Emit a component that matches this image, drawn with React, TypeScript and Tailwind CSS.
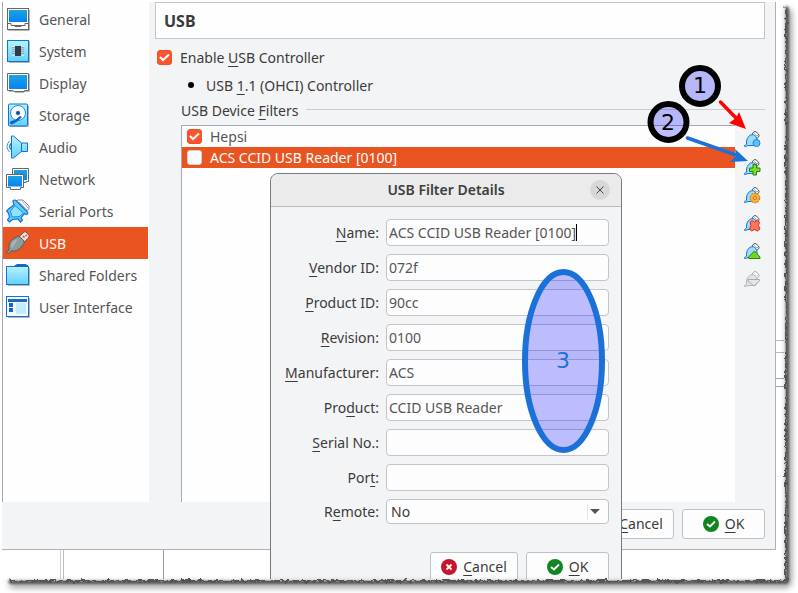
import type { ReactNode } from "react";

const FONT = "font-['Noto_Sans','Open_Sans',sans-serif]";

/* A label with its keyboard mnemonic: the letter after "&" is underlined. */
function Mnemonic({ text }: { text: string }) {
  const at = text.indexOf("&");
  if (at < 0) return <>{text}</>;
  return (
    <>
      {text.slice(0, at)}
      <span className="underline decoration-1 underline-offset-3">{text[at + 1]}</span>
      {text.slice(at + 2)}
    </>
  );
}

function Glyph({ children }: { children: ReactNode }) {
  return (
    <svg viewBox="0 0 24 24" className="size-6 shrink-0" aria-hidden="true">
      <defs>
        <linearGradient id="screen" x1="0" y1="0" x2="0" y2="1">
          <stop offset="0" stopColor="#1ba4de" />
          <stop offset="1" stopColor="#0583f5" />
        </linearGradient>
        <linearGradient id="pale" x1="0" y1="0" x2="0" y2="1">
          <stop offset="0" stopColor="#b5f3ff" />
          <stop offset="1" stopColor="#63d1fd" />
        </linearGradient>
      </defs>
      {children}
    </svg>
  );
}

const sidebarIcons: Record<string, ReactNode> = {
  General: (
    <Glyph>
      <path d="M2.500 23.500H23.500V3" stroke="#b5b5b5" fill="none" />
      <rect x="1.500" y="1.500" width="21" height="21" fill="#fff" stroke="#666" />
      <rect x="3" y="3" width="18" height="12" fill="url(#screen)" />
      <path d="M2 16.500H5V18.500H19V16.500H22M9 18.500V19.500H15V18.500" fill="none" stroke="#666" />
    </Glyph>
  ),
  System: (
    <Glyph>
      <path d="M3 23.500H23.500V2" stroke="#b5b5b5" fill="none" />
      <rect x="1.500" y="1.500" width="21" height="21" fill="url(#pale)" stroke="#1470d2" />
      <path d="M6 8H18M6 10H18M6 12H18M6 14H18M6 16H18" stroke="#fff" />
      <path d="M6 8.800H18M6 10.800H18M6 12.800H18M6 14.800H18" stroke="#567" strokeWidth=".7" />
      <rect x="9" y="7" width="6" height="10" fill="#303a48" />
    </Glyph>
  ),
  Display: (
    <Glyph>
      <path d="M3 20.500H9V21.500H18V20.500H23.500V3" stroke="#b5b5b5" fill="none" />
      <path d="M1.500 2.500H22.500V19.500H18.500V20.500H8.500L6.500 19.500H1.500Z" fill="#fff" stroke="#666" />
      <rect x="3" y="4" width="18" height="14" fill="url(#screen)" />
    </Glyph>
  ),
  Storage: (
    <Glyph>
      <path d="M4 23.500H22.500V3" stroke="#b5b5b5" fill="none" />
      <rect x="2.500" y="1" width="19" height="22" rx="1" fill="url(#pale)" stroke="#1470d2" />
      <circle cx="12" cy="10" r="7.500" fill="#fff" stroke="#1c8eda" />
      <circle cx="12" cy="10" r="3" fill="#d4efff" />
      <circle cx="12" cy="10" r="2" fill="#1248a8" />
      <path d="M5 18L9 17L14 13L16 14L12 18L7 21Q3.500 22 4 19Z" fill="#1262cc" />
    </Glyph>
  ),
  Audio: (
    <Glyph>
      <path d="M3.500 6Q-1.500 11.500 3.500 17" fill="none" stroke="#3c8fe0" />
      <path d="M5 8.500Q2.500 11.500 5 14.500" fill="none" stroke="#1470d2" strokeWidth="1.300" />
      <path d="M5.500 1H7.500L15.500 8H21.500V16.500H15.500L7.500 23H5.500Z" fill="url(#pale)" stroke="#1470d2" />
      <path d="M15.500 8V16.500" stroke="#1470d2" />
    </Glyph>
  ),
  Network: (
    <Glyph>
      <path d="M6.500 1.500H22.500V14.500H20V15.500H9V14.500H6.500Z" fill="#fff" stroke="#666" />
      <rect x="8" y="3" width="13" height="10" fill="url(#screen)" />
      <path d="M.500 7.500H17.500V20.500H14.500V22.500H4.500V20.500H.500Z" fill="#fff" stroke="#666" />
      <rect x="2" y="9" width="14" height="10.500" fill="url(#screen)" />
    </Glyph>
  ),
  "Serial Ports": (
    <Glyph>
      <path d="M9 3L12 1H17L23 7V10L19 13" fill="#fff" stroke="#888" />
      <path d="M13 3L21 11M16 2L22 9" stroke="#aaa" />
      <path d="M7 2Q8.500 0 10.500 2L21.500 13Q22.500 15 20.500 15.500L18.500 14.500L15 19L16.500 21L14.500 23L12 20L6.500 20.500L3.500 23L1.500 21L3.500 18L2.500 14L.500 12L2.500 10L8 6Z" fill="#5ccdfd" stroke="#1470d2" strokeWidth="1.200" />
      <path d="M9 6.500L17.500 14L13.500 17.500L6 18L4.500 12Z" fill="#8de2ff" stroke="#268ce0" />
    </Glyph>
  ),
  USB: (
    <Glyph>
      <path d="M13 6L18 1Q19 .500 20 1L23 4.500Q23.500 6 22.500 7L17 12Z" fill="#f8ded6" stroke="#75554e" />
      <path d="M17 5L18.500 6.500M19.500 4L20.500 5" stroke="#c64f35" strokeWidth="1.500" />
      <path d="M3 19Q2 11 7 8L12 5Q14 5 18 10Q19 12 16 15Q12 21 5 20L2 23L.500 21.500Z" fill="#8c9c9f" stroke="#59595b" />
      <path d="M5 17Q5 11 9 9L12 8L7 16Z" fill="#a9b5b6" />
    </Glyph>
  ),
  "Shared Folders": (
    <Glyph>
      <path d="M2 22.500H23.500V5" stroke="#b5b5b5" fill="none" />
      <path d="M8 3L11 1H20L22 3V5H8Z" fill="#1768c6" />
      <rect x=".500" y="3.500" width="22" height="18" fill="url(#pale)" stroke="#1470d2" />
      <path d="M9 3H22" stroke="#1768c6" strokeWidth="2" />
    </Glyph>
  ),
  "User Interface": (
    <Glyph>
      <path d="M2 22.500H23.500V3" stroke="#b5b5b5" fill="none" />
      <rect x=".500" y="1.500" width="22" height="20" fill="#f1fbff" stroke="#1470d2" />
      <rect x="2" y="4" width="19" height="3" fill="#1c68c2" />
      <path d="M3 8H7V12H3ZM3 13H7V17H3Z" fill="#1364cc" />
      <rect x="10" y="8" width="10" height="11" fill="#c2edff" />
    </Glyph>
  ),
};

function FilterIcon({ disabled, children }: { disabled?: boolean; children?: ReactNode }) {
  return (
    <svg viewBox="0 0 17 17" className="size-[17px]" aria-hidden="true">
      <path d="M8 3L10 .800Q11 .300 12 .800L14.500 3Q15.500 4.500 14.500 6L12 8Z" fill="#fff" stroke={disabled ? "#aaa" : "#555"} />
      <path d="M10.500 2.500L11.500 3.500M12.500 4L13.500 5" stroke={disabled ? "#bbb" : "#555"} />
      <path
        d="M2.500 13Q2 6.500 6.500 4Q9.500 2.500 12 5.500Q13.500 8 13 12L11.500 14.500H4L1.500 15.500H.500V14.500Z"
        fill={disabled ? "#e4e4e4" : "#9bdcfb"}
        stroke={disabled ? "#b5b5b5" : "#1b78c8"}
      />
      {children}
    </svg>
  );
}

const tools: { name: string; disabled?: boolean; badge: ReactNode }[] = [
  { name: "Add empty filter", badge: <circle cx="12.500" cy="12" r="3.500" fill="#5cc0ff" stroke="#2385d8" /> },
  {
    name: "Add filter from device",
    badge: <path d="M9 5.500H12.500V9H16V12.500H12.500V16H9V12.500H5.500V9H9Z" fill="#7bdd22" stroke="#268316" />,
  },
  {
    name: "Edit filter",
    badge: (
      <>
        <circle cx="11" cy="11" r="4.800" fill="#ffad35" stroke="#c56b0a" strokeDasharray="2 1" />
        <circle cx="11" cy="11" r="1.500" fill="#fff0c8" stroke="#c56b0a" />
      </>
    ),
  },
  {
    name: "Remove filter",
    badge: (
      <path
        d="M6 7L8 5.500L10.500 7L13 5.500L15.500 7L14.500 10.500L16 14L13.500 16L10.500 14.500L7.500 16L5.500 14L7 10.500Z"
        fill="#ff745c"
        stroke="#d23620"
      />
    ),
  },
  { name: "Move filter up", badge: <path d="M4.500 15.500V14L10.500 8L16 14V15.500Z" fill="#74d71c" stroke="#278619" /> },
  {
    name: "Move filter down",
    disabled: true,
    badge: <path d="M4 8.500H15.500V10L10 15L4 10Z" fill="#e6e6e6" stroke="#aaa" />,
  },
];

function Check({ id, checked }: { id: string; checked?: boolean }) {
  return (
    <span className="grid size-4 shrink-0 place-items-center">
      <input
        id={id}
        type="checkbox"
        defaultChecked={checked}
        className="peer col-start-1 row-start-1 size-[15px] appearance-none rounded-[3px] border border-[#d5d0ce] bg-[#fafafa] checked:border-[#f4511e] checked:bg-[#fb5430]"
      />
      <svg viewBox="0 0 15 15" className="pointer-events-none col-start-1 row-start-1 hidden size-[15px] peer-checked:block">
        <path d="M3 7L6 10L12 4.500" fill="none" stroke="#fff" strokeWidth="2" />
      </svg>
    </span>
  );
}

function DialogButton({ kind, className }: { kind: "ok" | "cancel"; className: string }) {
  const ok = kind === "ok";
  return (
    <button
      type="button"
      className={`flex h-[30px] items-center justify-center gap-1.5 rounded-[3px] border border-[#bdc2c9] bg-[#fdfdfd] text-[#3b3b3b] ${className}`}
    >
      <svg viewBox="0 0 16 16" className="size-4 shrink-0" aria-hidden="true">
        <circle cx="8" cy="8" r="8" fill={ok ? "#118522" : "#c7162b"} />
        <path
          d={ok ? "M4 8L7 10.500L12 5.500" : "M5.500 5.500L10.500 10.500M10.500 5.500L5.500 10.500"}
          fill="none"
          stroke="#fff"
          strokeWidth="1.800"
        />
      </svg>
      <span>
        <Mnemonic text={ok ? "&OK" : "&Cancel"} />
      </span>
    </button>
  );
}

const fields = [
  { id: "name", label: "&Name:", value: "ACS CCID USB Reader [0100]", caret: true },
  { id: "vendor", label: "&Vendor ID:", value: "072f" },
  { id: "product-id", label: "&Product ID:", value: "90cc" },
  { id: "revision", label: "&Revision:", value: "0100" },
  { id: "manufacturer", label: "&Manufacturer:", value: "ACS" },
  { id: "product", label: "Pro&duct:", value: "CCID USB Reader" },
  { id: "serial", label: "&Serial No.:", value: "" },
  { id: "port", label: "Por&t:", value: "" },
];

function FilterDialog() {
  return (
    <section
      role="dialog"
      aria-labelledby="dialog-title"
      className="absolute top-[173px] left-[270px] w-[352px] rounded-t-lg border border-[#77797c] bg-[#f3f4f6]"
    >
      <header className="grid h-[33px] grid-cols-[1fr_auto_1fr] items-center rounded-t-lg border-b border-[#b9b9b9] bg-[#ebebeb] px-[11px]">
        <h2 id="dialog-title" className="col-start-2 font-semibold text-[#3d3d3d]">
          USB Filter Details
        </h2>
        <button type="button" aria-label="Close" className="grid size-5 place-items-center justify-self-end rounded-full bg-[#d8d8d8]">
          <svg viewBox="0 0 8 8" className="size-2">
            <path d="M.500 .500L7.500 7.500M7.500 .500L.500 7.500" stroke="#444" />
          </svg>
        </button>
      </header>
      <form className="px-3 pt-3">
        <div className="grid grid-cols-[96px_1fr] items-center gap-x-[7px] gap-y-2">
          {fields.map((f) => (
            <div key={f.id} className="contents">
              <label htmlFor={f.id} className="text-right whitespace-nowrap text-[#3b3b3b]">
                <Mnemonic text={f.label} />
              </label>
              <div className="flex h-[27px] items-center rounded-[4px] border border-[#c3c4cc] bg-[#fdfdfd] px-0.5">
                <input
                  id={f.id}
                  defaultValue={f.value}
                  className={`bg-transparent text-[#555] outline-none ${f.caret ? "[field-sizing:content]" : "w-full"}`}
                />
                {f.caret && <span className="h-[17px] w-px bg-black" />}
              </div>
            </div>
          ))}
          <label htmlFor="remote" className="text-right text-[#3b3b3b]">
            <Mnemonic text="R&emote:" />
          </label>
          <div className="grid h-[25px] items-center rounded-[4px] border border-[#bdc2c9] bg-[#fdfdfd]">
            <select
              id="remote"
              defaultValue="No"
              className="col-start-1 row-start-1 h-full appearance-none px-1 text-[#3b3b3b] outline-none"
            >
              <option>No</option>
              <option>Yes</option>
              <option>Any</option>
            </select>
            <span className="pointer-events-none col-start-1 row-start-1 mr-2 flex h-4 items-center justify-self-end border-l border-[#e4e4e4] pl-0.5">
              <svg viewBox="0 0 10 5" className="h-[5px] w-2.5">
                <path d="M0 0H10L5 5Z" fill="#555" />
              </svg>
            </span>
          </div>
        </div>
        <div className="flex justify-end gap-2 pt-7">
          <DialogButton kind="cancel" className="w-[88px]" />
          <DialogButton kind="ok" className="w-[83px]" />
        </div>
      </form>
    </section>
  );
}

/* Numbered call-outs and the arrows that lead from them. */
function Annotations() {
  return (
    <svg className="pointer-events-none absolute inset-0 h-full w-full font-['DejaVu_Sans',sans-serif]">
      <g fill="#0000ff" fillOpacity=".25" strokeWidth="6">
        <circle cx="700" cy="86" r="18" stroke="#000" />
        <circle cx="668.500" cy="122" r="18" stroke="#000" />
        <ellipse cx="563.500" cy="361" rx="38.500" ry="89" stroke="#1c71d8" />
      </g>
      <path d="M720.500 102L736 118" stroke="#f00" strokeWidth="3.500" strokeLinecap="round" />
      <path d="M746 129L729 123L736 118L739 112Z" fill="#f00" />
      <path d="M687.500 138L736 155" stroke="#1c71d8" strokeWidth="3.500" strokeLinecap="round" />
      <path d="M748 161L730 162L736 156L735 149Z" fill="#1c71d8" />
      <g textAnchor="middle" fontSize="22">
        <text x="700" y="93">1</text>
        <text x="668" y="130">2</text>
        <text x="563" y="368" fill="#1c71d8">3</text>
      </g>
    </svg>
  );
}

/* Ragged paper edge with its soft shadow, along the right and bottom. */
function TornEdge() {
  return (
    <>
      <svg className="absolute size-0" aria-hidden="true">
        <filter id="torn" x="-20" y="-20" width="900" height="700" filterUnits="userSpaceOnUse" colorInterpolationFilters="sRGB">
          <feTurbulence type="fractalNoise" baseFrequency=".25" numOctaves="3" seed="4" />
          <feDisplacementMap in="SourceGraphic" scale="6" xChannelSelector="R" yChannelSelector="G" />
          <feGaussianBlur stdDeviation=".4" />
        </filter>
      </svg>
      <div className="pointer-events-none absolute inset-0 overflow-hidden">
        <div className="absolute top-2 right-[7px] bottom-[6px] left-2 rounded-[6px] border-r-4 border-b-4 border-[#333]/70 blur-[3px]" />
        <div className="absolute top-1.5 right-[9px] bottom-[9px] left-2 rounded-[4px] border-r-3 border-b-3 border-[#444]/90 blur-[1px]" />
        <div className="absolute top-1.5 right-[11px] bottom-[11px] left-2 rounded-[3px] border-r-2 border-b-2 border-[#555] [filter:url(#torn)]" />
      </div>
    </>
  );
}

export default function App() {
  return (
    <div className={`relative flex h-screen flex-col overflow-hidden bg-white pt-0.5 pr-[14px] pb-[14px] pl-0.5 text-sm leading-5 ${FONT}`}>
      <div className="flex shrink-0">
        <main className="flex min-w-0 flex-1 flex-col border-r border-b border-[#aeb1b5] bg-[#f3f4f6]">
          <div className="flex">
            <nav className="w-[147px] shrink-0 border-l border-[#a3abb5] bg-[#fefefe] pt-px pr-px">
              {Object.entries(sidebarIcons).map(([name, icon]) => (
                <button
                  key={name}
                  type="button"
                  className={`flex h-8 w-full items-center gap-[9px] pl-[3px] whitespace-nowrap ${name === "USB" ? "bg-[#e95420] text-white" : "text-[#555]"}`}
                >
                  {icon}
                  <span className="pt-0.5">{name}</span>
                </button>
              ))}
            </nav>
            <div className="flex min-w-0 flex-1 flex-col pr-2.5 pl-1.5 text-[#3b3b3b]">
              <h1 className="flex h-[37px] items-center border border-[#c4c7cb] bg-[#fefefe] px-2 text-base font-bold">USB</h1>
              <div className="mt-1 flex h-7 items-center gap-2 pl-px">
                <Check id="enable" checked />
                <label htmlFor="enable" className="pt-0.5">
                  <Mnemonic text="Enable &USB Controller" />
                </label>
              </div>
              <div className="flex h-7 items-center gap-3 pl-[33px]">
                <input id="ohci" type="radio" name="controller" defaultChecked className="size-1.5 appearance-none rounded-full bg-black" />
                <label htmlFor="ohci" className="pt-0.5">
                  <Mnemonic text="USB &1.1 (OHCI) Controller" />
                </label>
              </div>
              <h2 className="flex h-6 items-center gap-2 pl-[26px] whitespace-nowrap">
                <span>
                  <Mnemonic text="USB Device &Filters" />
                </span>
                <span className="mb-1 h-px flex-1 bg-[#c9ccd0]" />
              </h2>
              <div className="mt-0.5 flex pl-[26px]">
                <ul className="h-[377px] flex-1 border-t border-l border-[#a3abb5] bg-[#fefefe]">
                  <li className="flex h-[21px] items-center gap-2 pl-1 text-[#555]">
                    <Check id="f0" checked />
                    <label htmlFor="f0">Hepsi</label>
                  </li>
                  <li className="flex h-[21px] items-center gap-2 bg-[#e95420] pl-1 text-white">
                    <Check id="f1" />
                    <label htmlFor="f1">ACS CCID USB Reader [0100]</label>
                  </li>
                </ul>
                <div className="flex w-[30px] flex-col items-center gap-[11px] pt-1.5 pl-1">
                  {tools.map((t) => (
                    <button key={t.name} type="button" aria-label={t.name} disabled={t.disabled}>
                      <FilterIcon disabled={t.disabled}>{t.badge}</FilterIcon>
                    </button>
                  ))}
                </div>
              </div>
            </div>
          </div>
          <footer className="flex justify-end gap-2 pt-[7px] pr-2.5 pb-2.5">
            <DialogButton kind="cancel" className="w-[88px]" />
            <DialogButton kind="ok" className="w-[83px]" />
          </footer>
        </main>
        {/* Sliver of the window behind */}
        <div className="w-2 pt-[338px]">
          <div className="h-[13px] border-y border-[#b4bac4]" />
          <div className="mt-[25px] h-[9px] border-y border-[#98a3b3]" />
        </div>
      </div>
      <div className="flex flex-1">
        <div className="w-[59px] border-r border-[#d2cfca]" />
        <div className="w-[3px] border-r border-[#b9bcc8]" />
        <div className="w-[100px] border-r border-[#9b9ea4]" />
      </div>
      <FilterDialog />
      <div className="absolute inset-x-0 bottom-0 h-[14px] bg-white" />
      <TornEdge />
      <Annotations />
    </div>
  );
}
